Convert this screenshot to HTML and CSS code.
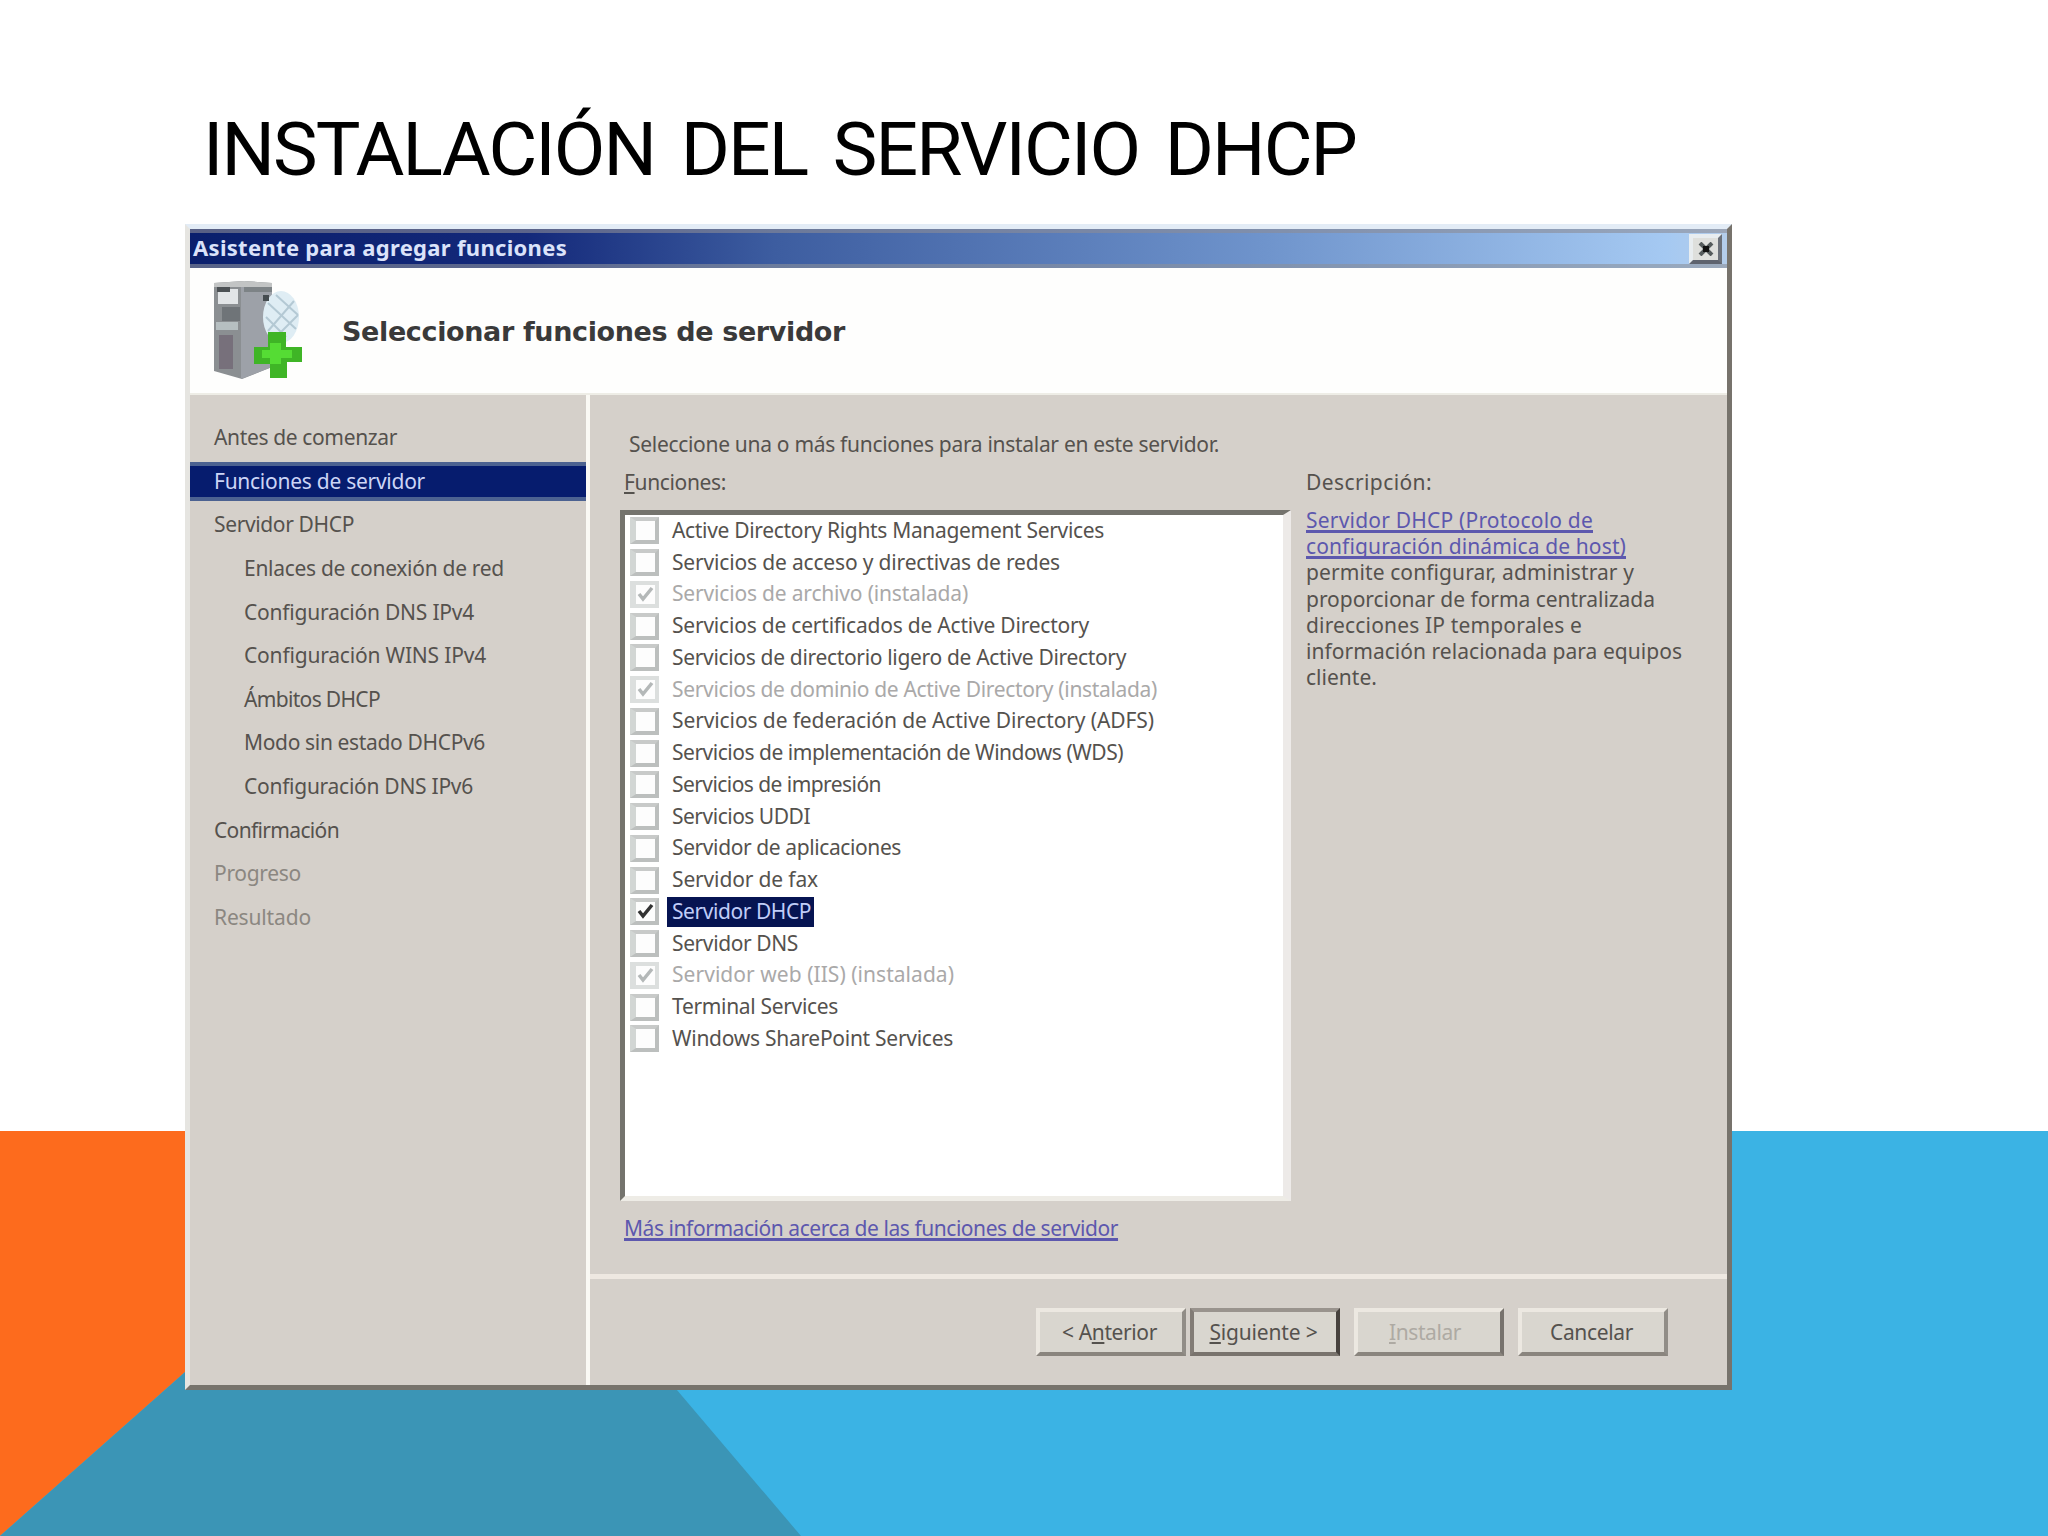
FILE: index.html
```html
<!DOCTYPE html>
<html lang="es">
<head>
  <meta charset="UTF-8" />
  <title>Instalación del servicio DHCP</title>
  <link rel="stylesheet" href="styles.css">
</head>
<body>

<div class="slide">
  <!-- Slide background shapes -->
  <svg class="shapes" viewBox="0 0 2048 405" preserveAspectRatio="none">
    <rect width="2048" height="405" fill="#3bb3e4"/>
    <polygon points="0,0 457,0 0,405" fill="#fd6b1d"/>
    <polygon points="0,405 457,0 801,405" fill="#3b95b6"/>
  </svg>

  <h1 class="title"><span data-width="1153">INSTALACIÓN DEL SERVICIO DHCP</span></h1>

  <div class="window">
    <div class="titlebar">
      <span class="titlebar-text" data-width="374">Asistente para agregar funciones</span>
      <div class="close">
        <svg width="16" height="14" viewBox="0 0 16 14"><path d="M2 1 L14 13 M14 1 L2 13" stroke="#555b5c" stroke-width="4"/><rect x="5" y="4" width="6" height="6" fill="#111"/></svg>
      </div>
    </div>

    <div class="header">
      <svg class="server-icon" width="92" height="100" viewBox="0 0 92 100">
        <polygon points="0,2 30,0 58,2 58,86 28,98 0,90" fill="#8b8f92"/>
        <polygon points="27,6 58,2 58,86 27,98" fill="#9da1a8"/>
        <polygon points="0,2 30,0 58,2 58,6 0,6" fill="#c2c4c4"/>
        <rect x="30" y="6" width="28" height="5" fill="#7d8386"/>
        <rect x="4" y="8" width="20" height="15" fill="#e2e5e7"/>
        <rect x="3" y="6" width="13" height="5" fill="#4c5154"/>
        <rect x="8" y="26" width="18" height="14" fill="#6f7478"/>
        <rect x="2" y="41" width="22" height="8" fill="#b6bfc1"/>
        <rect x="5" y="54" width="14" height="34" fill="#77707b"/>
        <ellipse cx="67" cy="36" rx="18" ry="26" fill="#dfedf4"/>
        <path d="M54 22 L82 48 M52 36 L72 56 M62 14 L84 34 M54 50 L80 20 M62 56 L84 34" stroke="#b4c9d4" stroke-width="2"/>
        <rect x="49" y="14" width="6" height="6" fill="#454c50"/>
        <path d="M54 51 H72 V66 H88 V81 H73 V97 H56 V83 H40 V66 H54 Z" fill="#3fb526"/>
        <path d="M56 62 H67 V69 H78 V77 H67 V83 H56 V77 H48 V69 H56 Z" fill="#55dc34"/>
      </svg>
      <h2 class="header-text"><span data-width="503">Seleccionar funciones de servidor</span></h2>
    </div>

    <div class="body">
      <ul class="steps">
        <li><span data-width="183">Antes de comenzar</span></li>
        <li class="active"><span data-width="211">Funciones de servidor</span></li>
        <li><span data-width="140">Servidor DHCP</span></li>
        <li class="sub"><span data-width="260">Enlaces de conexión de red</span></li>
        <li class="sub"><span data-width="230">Configuración DNS IPv4</span></li>
        <li class="sub"><span data-width="242">Configuración WINS IPv4</span></li>
        <li class="sub"><span data-width="136">Ámbitos DHCP</span></li>
        <li class="sub"><span data-width="241">Modo sin estado DHCPv6</span></li>
        <li class="sub"><span data-width="229">Configuración DNS IPv6</span></li>
        <li><span data-width="125">Confirmación</span></li>
        <li class="pending"><span data-width="87">Progreso</span></li>
        <li class="pending"><span data-width="97">Resultado</span></li>
      </ul>

      <div class="main">
        <div class="content">
          <p class="intro"><span data-width="590">Seleccione una o más funciones para instalar en este servidor.</span></p>
          <div class="columns">
            <div class="roles">
              <p class="label"><span data-width="102"><u>F</u>unciones:</span></p>
              <ul class="list" id="roles"></ul>
              <a class="link more"><span data-width="494">Más información acerca de las funciones de servidor</span></a>
            </div>
            <div class="description">
              <p class="label"><span data-width="126">Descripción:</span></p>
              <p class="line link"><span data-width="287">Servidor DHCP (Protocolo de</span></p>
              <p class="line link"><span data-width="320">configuración dinámica de host)</span></p>
              <p class="line"><span data-width="328">permite configurar, administrar y</span></p>
              <p class="line"><span data-width="349">proporcionar de forma centralizada</span></p>
              <p class="line"><span data-width="276">direcciones IP temporales e</span></p>
              <p class="line"><span data-width="376">información relacionada para equipos</span></p>
              <p class="line"><span data-width="71">cliente.</span></p>
            </div>
          </div>
        </div>

        <div class="footer">
          <div class="btn"><span data-width="95">&lt; A<u>n</u>terior</span></div>
          <div class="btn default"><span data-width="108"><u>S</u>iguiente &gt;</span></div>
          <div class="btn disabled"><span data-width="72"><u>I</u>nstalar</span></div>
          <div class="btn"><span data-width="83">Cancelar</span></div>
        </div>
      </div>
    </div>
  </div>
</div>

<script src="script.js"></script>
</body>
</html>
```
FILE: styles.css
```css
* {
  box-sizing: border-box;
}
body {
  margin: 0;
  background: white;
  font-family: "Noto Sans", "Open Sans", sans-serif;
  font-size: 21px;
  color: #55524e;
}
h1, h2, p, ul {
  margin: 0;
  padding: 0;
}
ul {
  list-style: none;
}
span[data-width] {
  display: inline-block;
  white-space: pre;
}
.slide {
  position: relative;
  width: 2048px;
  height: 1536px;
  overflow: hidden;
  padding: 104px 0 0 185px;
}
.shapes {
  position: absolute;
  left: 0;
  bottom: 0;
  width: 2048px;
  height: 405px;
}
.title {
  position: relative;
  height: 120px;
  padding-left: 18px;
  font-family: Roboto, sans-serif;
  font-size: 75px;
  font-weight: 400;
  line-height: 90px;
  word-spacing: 9px;
  color: black;
}

/* Wizard window */
.window {
  position: relative;
  display: flex;
  flex-direction: column;
  width: 1547px;
  height: 1166px;
  background: #d5d0ca;
  border-style: solid;
  border-width: 5px;
  border-color: #e3ecf6 #77736c #77736c #e6e5e1;
}
.titlebar {
  display: flex;
  align-items: center;
  justify-content: space-between;
  height: 39px;
  padding: 0 5px 0 3px;
  border-top: 4px solid rgba(140, 140, 150, 0.6);
  border-bottom: 4px solid rgba(140, 145, 155, 0.6);
  background: linear-gradient(to right, #0a1f6c 0%, #14297a 22%, #3d5da0 38%, #6f94cc 70%, #a5c9f2 96%, #b4cdea 100%);
}
.titlebar-text {
  margin-top: -3px;
  color: #dbe3fa;
  font-size: 22px;
  font-weight: bold;
  line-height: 30px;
}
.close {
  display: flex;
  align-items: center;
  justify-content: center;
  width: 33px;
  height: 30px;
  background: #dedfdc;
  border: 4px solid #e8edf0;
  border-right-color: #6b7079;
  border-bottom-color: #5e636e;
}
.header {
  display: flex;
  height: 127px;
  background: #fefefd;
  padding: 13px 0 0 24px;
  border-bottom: 2px solid #eeede6;
}
.header-text {
  margin-left: 36px;
  padding-top: 32px;
  font-family: "DejaVu Sans", sans-serif;
  font-size: 27px;
  line-height: 38px;
  font-weight: bold;
  color: #3a3a3a;
}
.body {
  display: flex;
  flex: 1;
}

/* Left steps */
.steps {
  width: 400px;
  padding-top: 21px;
  border-right: 4px solid #faf9f4;
}
.steps li {
  height: 43.65px;
  padding-left: 24px;
  line-height: 43.65px;
}
.steps .sub {
  padding-left: 54px;
}
.steps .active {
  height: 39px;
  margin: 2px 0 2.65px;
  line-height: 31px;
  color: #ccd5f6;
  background: #061c6e;
  border-top: 4px solid #4c6291;
  border-bottom: 4px solid #4c6291;
}
.steps .active span {
  line-height: 31px;
  vertical-align: top;
}
.steps .pending {
  color: #8b8781;
}

/* Right side */
.main {
  flex: 1;
  display: flex;
  flex-direction: column;
}
.content {
  height: 884px;
  padding: 30px 0 0 30px;
  border-bottom: 5px solid #eee8e1;
}
.intro {
  padding-left: 9px;
  line-height: 38px;
}
.columns {
  display: flex;
  gap: 15px;
}
.roles {
  width: 671px;
}
.label {
  height: 47px;
  padding-left: 4px;
  line-height: 38px;
}
.list {
  height: 691px;
  padding: 0 0 0 5px;
  background: white;
  border-style: solid;
  border-width: 5px;
  border-color: #74736d #edeae8 #eeece6 #74736d;
  border-right-width: 8px;
}
.list li {
  display: flex;
  align-items: center;
  height: 31.75px;
}
.check {
  display: flex;
  width: 29px;
  height: 27px;
  margin-right: 8px;
  background: #fdfdfd;
  border: 4px solid #bcbfbe;
  border-top-color: #c8cac9;
  border-left: 6px solid #d2d6d4;
}
.list .text {
  height: 30px;
  padding: 0 3px 0 5px;
  line-height: 28px;
}
.list .installed {
  color: #aaa9a9;
}
.list .installed .check {
  border-color: #dcdfde;
}
.list .selected .text {
  color: #c0cdf8;
  background: #061452;
}
.link {
  color: #5d58ae;
}
.link span {
  text-decoration: underline;
  text-decoration-thickness: 3px;
  text-underline-offset: 2px;
  text-decoration-skip-ink: none;
}
.more {
  display: block;
  padding: 8px 0 0 4px;
  line-height: 38px;
}
.description {
  flex: 1;
}
.description .label {
  height: 44px;
  padding-left: 0;
}
.line {
  height: 26.2px;
  line-height: 26.2px;
}
.footer {
  display: flex;
  gap: 14px;
  padding: 29px 0 0 446px;
}
.btn {
  width: 150px;
  height: 48px;
  padding-right: 3px;
  text-align: center;
  line-height: 41px;
  background: #d9d6cf;
  border: 4px solid #ece8e1;
  border-right-color: #918d87;
  border-bottom-color: #8a857e;
}
.btn:first-child {
  margin-right: -10px;
}
.btn.default {
  border-color: #99938d #47423e #79736d #827c76;
}
.btn.disabled {
  padding-right: 8px;
  color: #aeaaa3;
  border-right-color: #77726d;
}
```
FILE: script.js
```js
// label, text width, state
const roles = [
  ["Active Directory Rights Management Services", 432],
  ["Servicios de acceso y directivas de redes", 388],
  ["Servicios de archivo (instalada)", 296, "installed"],
  ["Servicios de certificados de Active Directory", 417],
  ["Servicios de directorio ligero de Active Directory", 454],
  ["Servicios de dominio de Active Directory (instalada)", 485, "installed"],
  ["Servicios de federación de Active Directory (ADFS)", 482],
  ["Servicios de implementación de Windows (WDS)", 451],
  ["Servicios de impresión", 209],
  ["Servicios UDDI", 138],
  ["Servidor de aplicaciones", 229],
  ["Servidor de fax", 146],
  ["Servidor DHCP", 139, "selected"],
  ["Servidor DNS", 126],
  ["Servidor web (IIS) (instalada)", 282, "installed"],
  ["Terminal Services", 166],
  ["Windows SharePoint Services", 281]
];

const list = document.getElementById("roles");

roles.forEach(function (role) {
  const state = role[2] || "";
  let mark = "";
  if (state) {
    const color = state === "selected" ? "#333" : "#b4b8b8";
    mark = '<svg width="19" height="19" viewBox="0 0 19 19"><path d="M3 9 L7 14 L16 3" fill="none" stroke="' + color + '" stroke-width="3.5"/></svg>';
  }
  const li = document.createElement("li");
  li.className = state;
  li.innerHTML = '<div class="check">' + mark + '</div><div class="text"><span data-width="' + role[1] + '">' + role[0] + '</span></div>';
  list.appendChild(li);
});

// spread the letters so that each text takes its own width
document.querySelectorAll("[data-width]").forEach(function (el) {
  const width = Number(el.dataset.width);
  const natural = el.getBoundingClientRect().width;
  const spacing = (width - natural) / el.textContent.length;
  el.style.letterSpacing = spacing.toFixed(3) + "px";
});
```
